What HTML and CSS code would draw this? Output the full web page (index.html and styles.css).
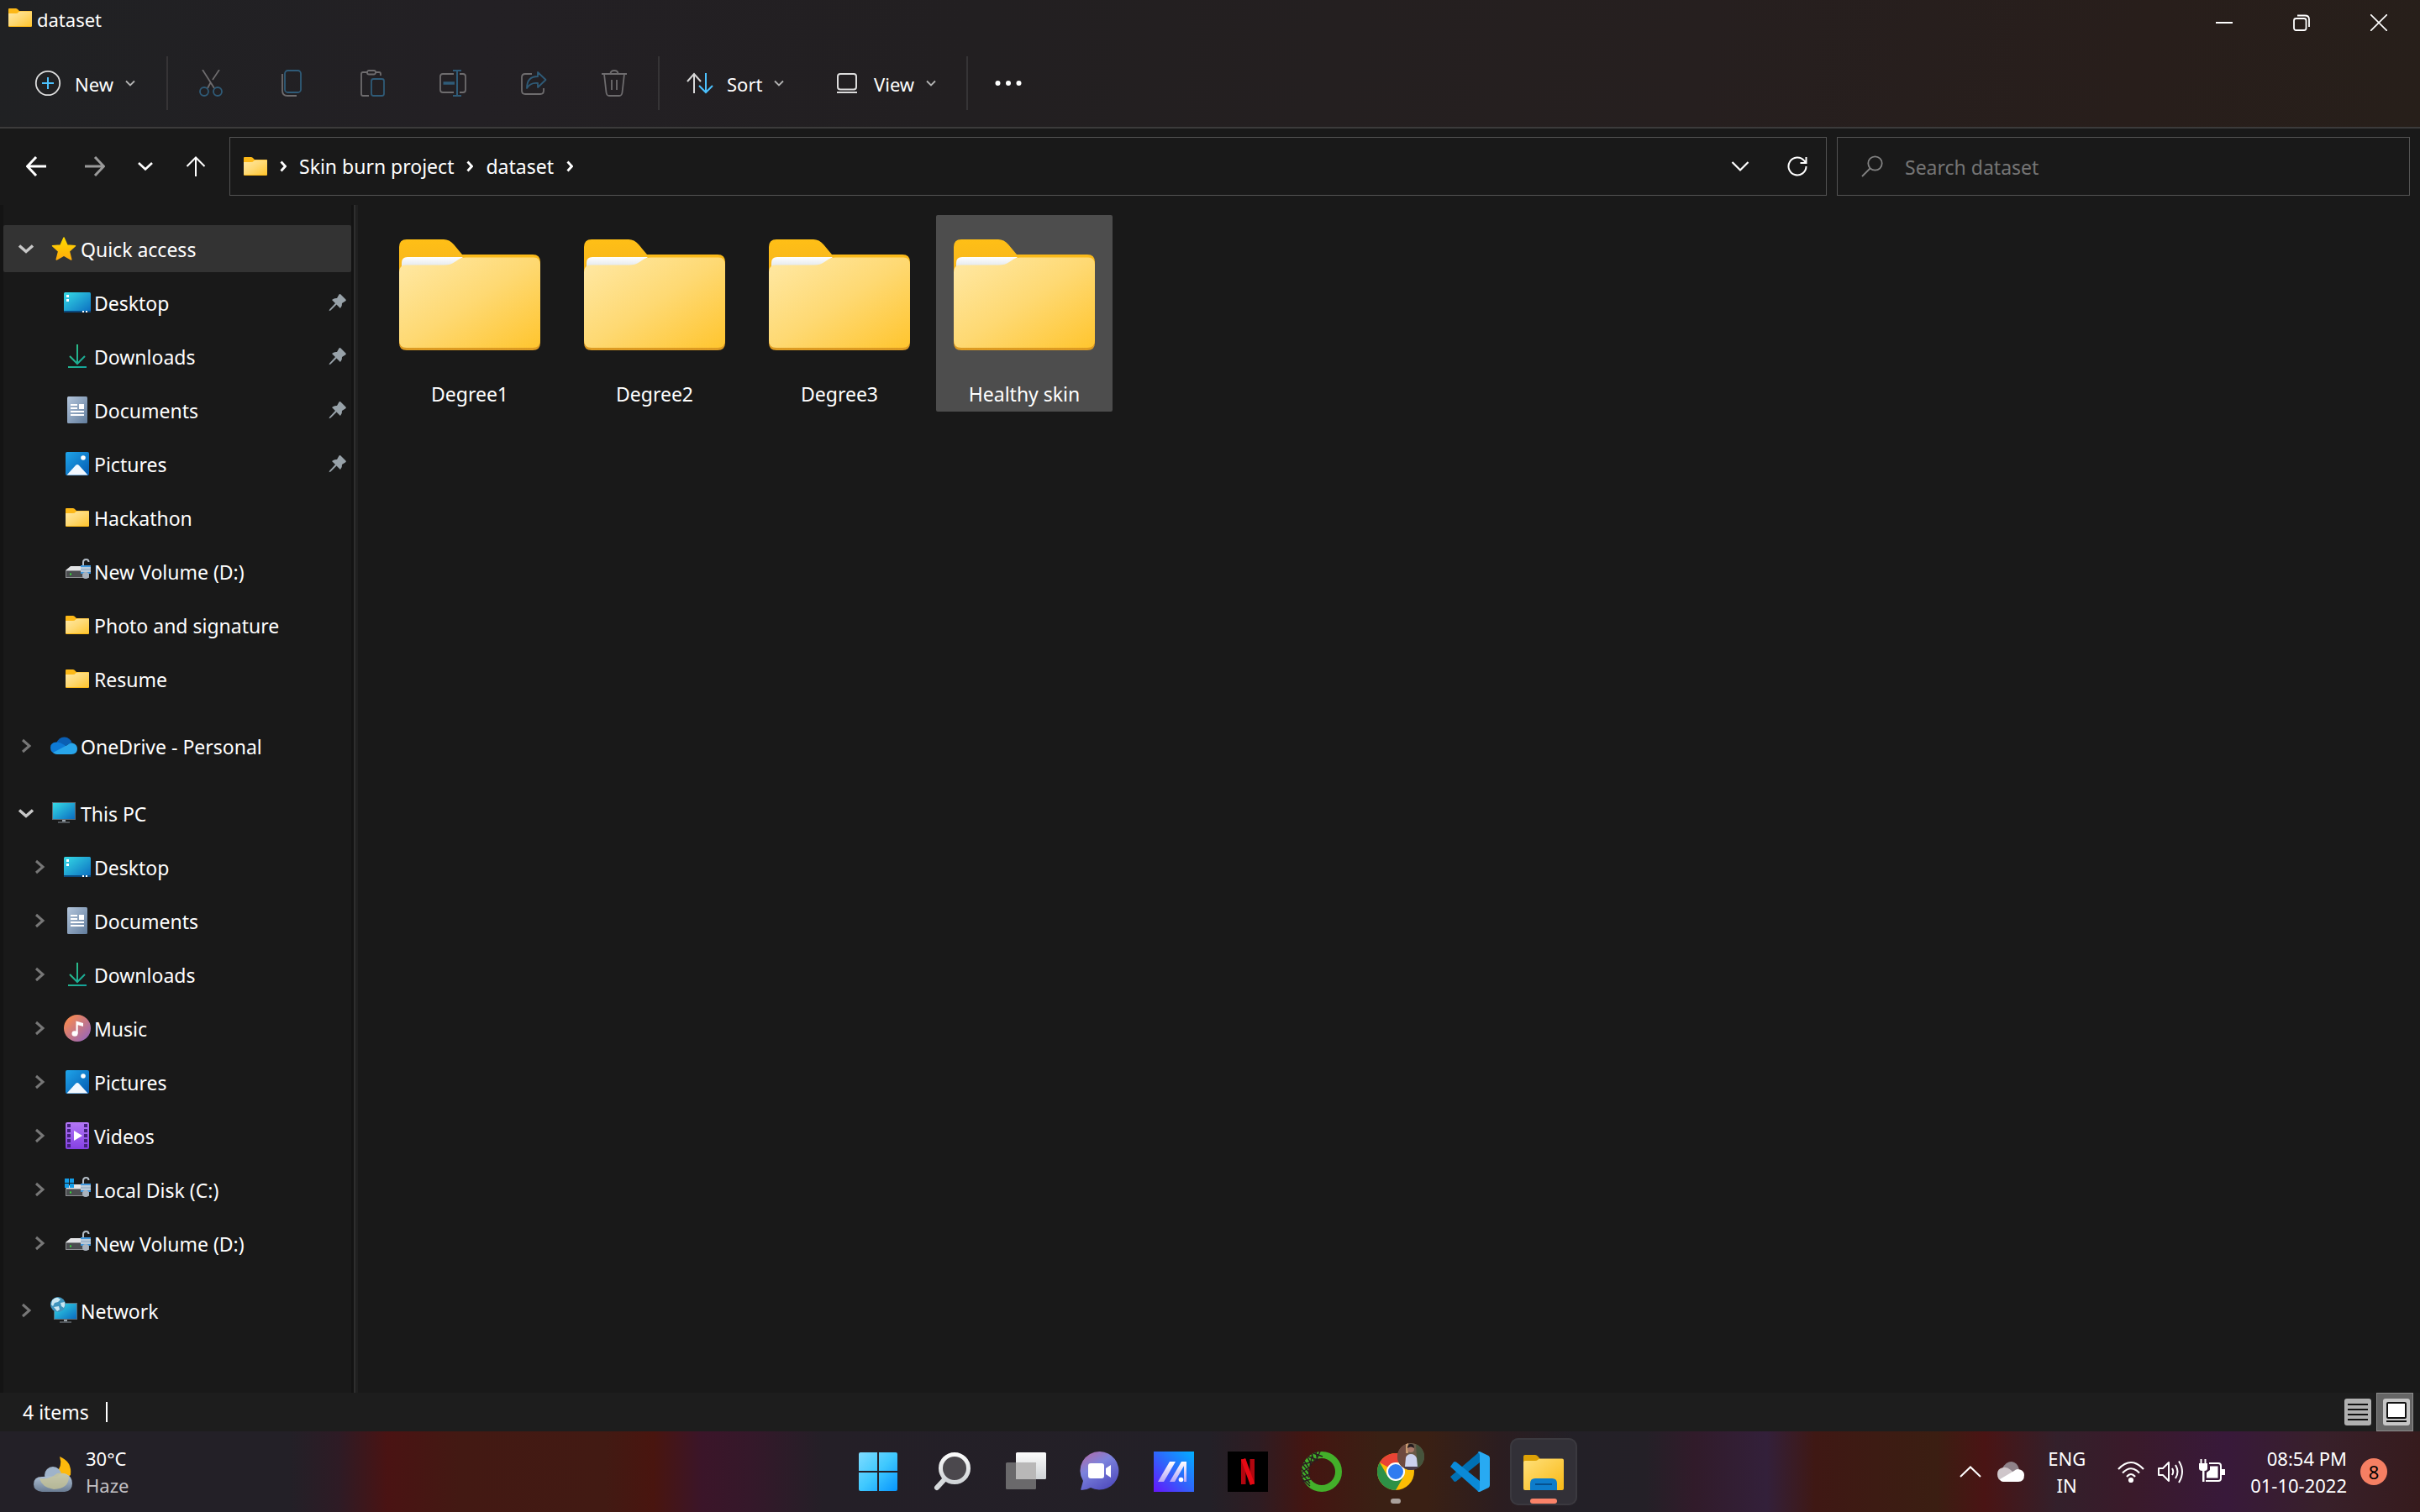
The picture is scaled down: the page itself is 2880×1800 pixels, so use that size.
FILE: index.html
```
<!DOCTYPE html>
<html lang="en">
<head>
    <meta charset="UTF-8">
    <meta name="viewport" content="width=device-width, initial-scale=1.0">
    <title>dataset</title>
    <link rel="stylesheet" href="styles.css">
</head>
<body>
    <!-- shared icons -->
    <svg class="sprite" aria-hidden="true">
        <defs>
            <linearGradient id="gFront" x1="0" y1="0" x2="1" y2="1">
                <stop offset="0" stop-color="#ffe9a6"/><stop offset="0.5" stop-color="#fed973"/><stop offset="1" stop-color="#ffc52e"/>
            </linearGradient>
            <linearGradient id="gBack" x1="0" y1="0" x2="0" y2="1">
                <stop offset="0" stop-color="#ffbf16"/><stop offset="0.5" stop-color="#f0ae22"/><stop offset="1" stop-color="#dc9a22"/>
            </linearGradient>
            <linearGradient id="gPaper" x1="0" y1="0" x2="0" y2="1">
                <stop offset="0" stop-color="#ffffff"/><stop offset="1" stop-color="#d9dfe4"/>
            </linearGradient>
            <linearGradient id="gScreen" x1="0" y1="0" x2="1" y2="1">
                <stop offset="0" stop-color="#35dbe6"/><stop offset="1" stop-color="#0b6cc0"/>
            </linearGradient>
            <linearGradient id="gDown" x1="0" y1="0" x2="1" y2="1">
                <stop offset="0" stop-color="#33c481"/><stop offset="1" stop-color="#12a29c"/>
            </linearGradient>
            <linearGradient id="gDoc" x1="0" y1="0" x2="1" y2="1">
                <stop offset="0" stop-color="#b4c6dc"/><stop offset="1" stop-color="#617c9c"/>
            </linearGradient>
            <linearGradient id="gPic" x1="0" y1="0" x2="1" y2="1">
                <stop offset="0" stop-color="#1fa5ea"/><stop offset="1" stop-color="#0459b0"/>
            </linearGradient>
            <linearGradient id="gMusic" x1="0" y1="0" x2="1" y2="1">
                <stop offset="0.1" stop-color="#fb8b4e"/><stop offset="1" stop-color="#8c62c4"/>
            </linearGradient>
            <linearGradient id="gVideo" x1="0" y1="0" x2="0" y2="1">
                <stop offset="0" stop-color="#b377f6"/><stop offset="1" stop-color="#8440e4"/>
            </linearGradient>
            <linearGradient id="gStar" x1="0" y1="0" x2="0" y2="1">
                <stop offset="0" stop-color="#ffdb00"/><stop offset="1" stop-color="#ffab0a"/>
            </linearGradient>
            <linearGradient id="gWin" gradientUnits="userSpaceOnUse" x1="1" y1="1" x2="47" y2="47">
                <stop offset="0" stop-color="#7fdcff"/><stop offset="0.5" stop-color="#3fc8fe"/><stop offset="1" stop-color="#0795fd"/>
            </linearGradient>
            <linearGradient id="gLens" x1="0" y1="0" x2="0" y2="1">
                <stop offset="0" stop-color="#fbfbfb"/><stop offset="1" stop-color="#cfd3d6"/>
            </linearGradient>
            <linearGradient id="gChat" x1="0" y1="0" x2="0.6" y2="1">
                <stop offset="0" stop-color="#b968a0"/><stop offset="0.45" stop-color="#7c83dd"/><stop offset="1" stop-color="#5350c0"/>
            </linearGradient>
            <linearGradient id="gAsus" x1="0" y1="1" x2="1" y2="0">
                <stop offset="0" stop-color="#6615fb"/><stop offset="0.5" stop-color="#2f66fb"/><stop offset="1" stop-color="#00b0ff"/>
            </linearGradient>
            <linearGradient id="gExp" x1="0" y1="0" x2="1" y2="1">
                <stop offset="0" stop-color="#ffe07a"/><stop offset="1" stop-color="#f9b915"/>
            </linearGradient>
            <linearGradient id="gCloud" x1="0" y1="0" x2="0" y2="1">
                <stop offset="0" stop-color="#b9cbe0"/><stop offset="1" stop-color="#6a7c92"/>
            </linearGradient>
            <linearGradient id="gSilver" x1="0" y1="0" x2="0" y2="1">
                <stop offset="0" stop-color="#ffffff"/><stop offset="1" stop-color="#b7a6f7"/>
            </linearGradient>
            <clipPath id="cAvatar"><circle cx="42" cy="6" r="16"/></clipPath>
        </defs>

        <symbol id="folder-big" viewBox="0 0 168 132">
            <path fill="url(#gBack)" d="M0 9Q0 0 9 0H53Q60 0 65 6L75 18H159Q168 18 168 27V123Q168 132 159 132H9Q0 132 0 123Z"/>
            <path fill="url(#gPaper)" d="M3 36V28Q3 21 10 21H76L66 29L56 34Z"/>
            <path fill="url(#gFront)" d="M0 39Q0 30.500 8 30.500H54Q61 30.500 66 27L72 23Q75 21.500 79 21.500H160Q168 21.500 168 30V120Q168 129 159 129H9Q0 129 0 120Z"/>
        </symbol>
        <symbol id="folder" viewBox="0 0 28 22">
            <path fill="#fcb817" d="M0 1Q0 0 1 0H9Q10.500 0 11.500 1.500L13 3H27Q28 3 28 4V21Q28 22 27 22H1Q0 22 0 21Z"/>
            <path fill="url(#gFront)" d="M0 6H9Q11 6 12 4.500Q13 3.500 14.500 3.500H28V21H0Z"/>
        </symbol>
        <symbol id="star" viewBox="0 0 32 32">
            <path fill="url(#gStar)" stroke="url(#gStar)" stroke-width="1.500" stroke-linejoin="round" d="M16 3L20 12L29.500 12.800L22.300 19.300L24.800 29L16 24L7.200 29L9.700 19.300L2.500 12.800L12 12Z"/>
        </symbol>
        <symbol id="desktop" viewBox="0 0 32 32">
            <rect y="4" width="32" height="24" rx="1.500" fill="url(#gScreen)"/>
            <path d="M0 26H32V27Q32 28 31 28H1Q0 28 0 27Z" fill="#0a4a80"/>
            <path d="M3 7h3v3H3zM3 12h3v3H3zM22 26h2v2h-2zM26 26h2v2h-2z" fill="#fff"/>
        </symbol>
        <symbol id="downloads" viewBox="0 0 32 32">
            <path d="M16 2V25M7 16L16 25L25 16M5 29H27" fill="none" stroke="url(#gDown)" stroke-width="2"/>
        </symbol>
        <symbol id="documents" viewBox="0 0 32 32">
            <rect x="4" width="24" height="32" rx="1.500" fill="url(#gDoc)"/>
            <path d="M8 9h8v2H8zM8 13h8v2H8zM18 9h6v6h-6zM8 17h16v2H8zM8 21h16v2H8z" fill="#fff"/>
        </symbol>
        <symbol id="pictures" viewBox="0 0 32 32">
            <rect x="2" y="2" width="28" height="28" rx="2" fill="url(#gPic)"/>
            <path d="M3.500 29.500L14 18Q16 16 18 18L28.500 29.500Z" fill="#f2f8ff"/>
            <circle cx="23" cy="9" r="2.800" fill="#fff"/>
        </symbol>
        <symbol id="music" viewBox="0 0 32 32">
            <circle cx="16" cy="16" r="16" fill="url(#gMusic)"/>
            <ellipse cx="13" cy="22.500" rx="3.500" ry="3.200" fill="#fff"/>
            <path d="M14.500 22.500V7.500L23 10V14L16.700 12.200V22.500Z" fill="#fff"/>
        </symbol>
        <symbol id="videos" viewBox="0 0 32 32">
            <rect x="2" width="28" height="32" rx="2" fill="url(#gVideo)"/>
            <path d="M4 2h4v4H4zM4 8h4v4H4zM4 14h4v4H4zM4 20h4v4H4zM4 26h4v4H4zM24 2h4v4h-4zM24 8h4v4h-4zM24 14h4v4h-4zM24 20h4v4h-4zM24 26h4v4h-4z" fill="#43217c"/>
            <path d="M12 10L22 16L12 22Z" fill="#fff"/>
        </symbol>
        <symbol id="drive" viewBox="0 0 32 32">
            <path d="M2 15L8 10H24L30 15Z" fill="#e2e3e5"/>
            <rect x="2" y="15" width="28" height="9" fill="#8d8f92"/>
            <rect x="3" y="16" width="26" height="7" fill="#4b4d50"/>
            <rect x="7" y="18.500" width="2" height="2" fill="#35e03a"/>
            <path d="M23 9V5.500Q23 2 26.500 2Q29.500 2 29.500 5" fill="none" stroke="#b5bec7" stroke-width="2"/>
            <rect x="20" y="9" width="12" height="10" fill="#3f97dd"/>
            <path d="M20 11h12v6H20z" fill="#b9cbdb"/>
            <path d="M20 13.500h12v1H20z" fill="#8aa3ba"/>
            <circle cx="26" cy="21" r="4" fill="#a8b2bd"/>
        </symbol>
        <symbol id="drive-win" viewBox="0 0 32 32">
            <use href="#drive"/>
            <path d="M1 3h5v5H1zM7 3h5v5H7zM1 9h5v5H1zM7 9h5v5H7z" fill="#139de8"/>
        </symbol>
        <symbol id="onedrive" viewBox="0 0 32 32">
            <path d="M7 13Q10 5 17 5.500Q23 6 25.500 12L16 17Z" fill="#0a5fb4"/>
            <path d="M6 25Q0 24 0 18Q0 12 7 11.500Q11 11 15 14L22 18L8 26Z" fill="#0d7ad6"/>
            <path d="M3 24L20 15Q23 12 26 12.500Q32 14 32 19.500Q32 26 25 26H8Q5 26 3 24Z" fill="#28a5ea"/>
        </symbol>
        <symbol id="pc" viewBox="0 0 32 32">
            <rect x="2" y="3" width="28" height="21" fill="#5c6d78"/>
            <rect x="3" y="4" width="26" height="19" fill="url(#gScreen)"/>
            <path d="M14 24h4v2h-4z" fill="#9aa4ab"/><path d="M9 26h14v2H9z" fill="#50555a"/>
        </symbol>
        <symbol id="network" viewBox="0 0 32 32">
            <rect x="4" y="7" width="28" height="20" fill="#5c6d78"/>
            <rect x="5" y="8" width="26" height="18" fill="url(#gScreen)"/>
            <path d="M16 27h4v2h-4z" fill="#9aa4ab"/><path d="M11 29h14v2H11z" fill="#50555a"/>
            <circle cx="9" cy="9" r="9" fill="#3f94bd"/>
            <path d="M2 4Q6 0 9 1L12 3L9 6L5 7L3 11L1 9ZM12 7L17 6Q18 10 16 13L13 11ZM4 12L10 11L11 15L8 17Z" fill="#c9e7f2"/>
        </symbol>
        <symbol id="pin" viewBox="0 0 22 22">
            <path d="M12.500 1.500Q13.500 .5 14.500 1.500L20.500 7.500Q21.500 8.500 20 9.500L16 12Q16.500 15 14 18L9.500 13.500L2.500 20.500L.5 21.300L1.300 19.300L8 12L4 8Q7 5.500 10 6Z" fill="#98a2a9"/>
        </symbol>
        <symbol id="chev-right" viewBox="0 0 22 22">
            <path d="M7 4L15 11L7 18" fill="none" stroke="currentColor" stroke-width="3"/>
        </symbol>
        <symbol id="chev-down" viewBox="0 0 22 22">
            <path d="M3 7.500L11 14.500L19 7.500" fill="none" stroke="currentColor" stroke-width="3.500"/>
        </symbol>
        <symbol id="caret" viewBox="0 0 12 8">
            <path d="M1 1.500L6 6.500L11 1.500" fill="none" stroke="#b4b4b4" stroke-width="1.800"/>
        </symbol>
        <symbol id="crumb" viewBox="0 0 8 14">
            <path d="M1.500 1.500L6.500 7L1.500 12.500" fill="none" stroke="#fff" stroke-width="2.800"/>
        </symbol>
    </svg>

    <header class="window-head">
        <div class="titlebar">
            <h1 class="title"><svg class="ic-folder"><use href="#folder"/></svg>dataset</h1>
            <div class="window-buttons">
                <button aria-label="Minimize"><svg viewBox="0 0 20 20"><path d="M0 10H20" stroke="#fff" stroke-width="2"/></svg></button>
                <button aria-label="Restore"><svg viewBox="0 0 20 20" fill="none" stroke="#fff" stroke-width="1.800"><rect x="1" y="5" width="14.500" height="14" rx="2.500"/><path d="M5 1.500H14Q19 1.500 19 6V15"/></svg></button>
                <button aria-label="Close"><svg viewBox="0 0 20 20"><path d="M0 0L20 20M20 0L0 20" stroke="#fff" stroke-width="1.600"/></svg></button>
            </div>
        </div>
        <div class="commands">
            <button class="cmd new">
                <svg class="ic32" viewBox="0 0 32 32" fill="none"><circle cx="16" cy="16" r="14.200" stroke="#dcdcdc" stroke-width="1.800"/><path d="M16 9V23M9 16H23" stroke="#4cc2ff" stroke-width="2"/></svg>
                <span>New</span><svg class="ic-caret"><use href="#caret"/></svg>
            </button>
            <span class="sep"></span>
            <button class="tool" aria-label="Cut"><svg class="ic32" viewBox="0 0 32 32" fill="none" stroke-width="1.800"><path d="M6 0L20 22M26 0L18 12M15.500 15.500L12 22" stroke="#6e6c6e"/><circle cx="8" cy="26" r="5" stroke="#2f5b78"/><circle cx="24" cy="26" r="5" stroke="#2f5b78"/></svg></button>
            <button class="tool" aria-label="Copy"><svg class="ic32" viewBox="0 0 32 32" fill="none" stroke-width="1.800"><path d="M5 5V25Q5 31 11 31H22" stroke="#6e6c6e"/><rect x="8" y="1" width="19" height="26" rx="3.500" stroke="#2f5b78"/></svg></button>
            <button class="tool" aria-label="Paste"><svg class="ic32" viewBox="0 0 32 32" fill="none" stroke-width="1.800"><path d="M10 3H5Q3 3 3 5V29Q3 31 5 31H12M20 3H24Q26 3 26 5V7" stroke="#6e6c6e"/><rect x="10" y="1" width="10" height="4.500" rx="2" stroke="#6e6c6e"/><rect x="15" y="11" width="15" height="20" rx="2.500" stroke="#2f5b78"/></svg></button>
            <button class="tool" aria-label="Rename"><svg class="ic32" viewBox="0 0 32 32" fill="none" stroke-width="1.800"><path d="M17 5H4Q1 5 1 8V24Q1 27 4 27H17M24 5H28Q31 5 31 8V24Q31 27 28 27H24" stroke="#6e6c6e"/><path d="M16 1H26M16 31H26M21 1V31" stroke="#2f5b78" stroke-width="2"/><path d="M4.500 16H18" stroke="#2f5b78" stroke-width="3.500"/></svg></button>
            <button class="tool" aria-label="Share"><svg class="ic32" viewBox="0 0 32 32" fill="none" stroke-width="1.800"><path d="M14 5H6Q2 5 2 9V25Q2 29 6 29H24Q28 29 28 25V22" stroke="#6e6c6e"/><path d="M21 3L30.500 12L21 21V16Q12 15 8 22Q8 8 21 8Z" stroke="#2f5b78" stroke-linejoin="round"/></svg></button>
            <button class="tool" aria-label="Delete"><svg class="ic32" viewBox="0 0 32 32" fill="none" stroke="#6e6c6e" stroke-width="1.800"><path d="M1 5H31M11.500 5Q11.500 1 16 1Q20.500 1 20.500 5M4 5L6.500 27Q7 31 10 31H22Q25 31 25.500 27L28 5M13 12V24M19 12V24"/></svg></button>
            <span class="sep"></span>
            <button class="cmd sort">
                <svg class="ic32" viewBox="0 0 32 32" fill="none" stroke-width="2"><path d="M9 28V5M1 14L9 5L17 14" stroke="#d8d8d8"/><path d="M23 4V27M15 19L23 27L31 19" stroke="#4cc2ff"/></svg>
                <span>Sort</span><svg class="ic-caret"><use href="#caret"/></svg>
            </button>
            <button class="cmd view">
                <svg class="ic32" viewBox="0 0 32 32" fill="none" stroke="#dcdcdc" stroke-width="2"><rect x="5" y="5" width="22" height="18.500" rx="3"/><path d="M4 27H28"/></svg>
                <span>View</span><svg class="ic-caret"><use href="#caret"/></svg>
            </button>
            <span class="sep"></span>
            <button class="tool more" aria-label="See more"><svg class="ic32" viewBox="0 0 32 32" fill="#fff"><circle cx="3.500" cy="16" r="3"/><circle cx="16" cy="16" r="3"/><circle cx="28.500" cy="16" r="3"/></svg></button>
        </div>
    </header>

    <div class="navbar">
        <div class="history">
            <button aria-label="Back"><svg viewBox="0 0 24 24"><path d="M24 12H2M12 1L1.500 12L12 23" stroke="#fff" stroke-width="3"/></svg></button>
            <button aria-label="Forward"><svg viewBox="0 0 24 24"><path d="M0 12H22M12 1L22.500 12L12 23" stroke="#9a9a9a" stroke-width="3"/></svg></button>
            <button class="recent" aria-label="Recent locations"><svg viewBox="0 0 24 24"><path d="M4 8L12 15.500L20 8" stroke="#fff" stroke-width="2.600"/></svg></button>
            <button aria-label="Up"><svg viewBox="0 0 24 24"><path d="M12 24V2M1.500 12L12 1.500L22.500 12" stroke="#fff" stroke-width="2"/></svg></button>
        </div>
        <div class="address">
            <svg class="ic-folder"><use href="#folder"/></svg>
            <svg class="ic-crumb"><use href="#crumb"/></svg>
            <a href="#">Skin burn project</a>
            <svg class="ic-crumb"><use href="#crumb"/></svg>
            <a href="#">dataset</a>
            <svg class="ic-crumb"><use href="#crumb"/></svg>
            <div class="address-end">
                <button aria-label="Previous locations"><svg viewBox="0 0 24 24"><path d="M2.500 7L12 16.500L21.500 7" stroke="#fff" stroke-width="2.200"/></svg></button>
                <button aria-label="Refresh"><svg viewBox="0 0 24 24"><path d="M22.500 12A10.500 10.500 0 1 1 20 5.200L22 7.500M22.500 1V8H15.500" stroke="#fff" stroke-width="2"/></svg></button>
            </div>
        </div>
        <label class="search">
            <svg viewBox="0 0 26 26" fill="none" stroke="#828282" stroke-width="1.800"><circle cx="16.500" cy="9.500" r="8.200"/><path d="M10.500 15.500L1 25"/></svg>
            <input type="search" placeholder="Search dataset" aria-label="Search dataset">
        </label>
    </div>

    <div class="body">
        <nav class="sidebar">
            <ul class="tree">
                <li><a class="row active" href="#"><svg class="ic-chev open"><use href="#chev-down"/></svg><svg class="ic32"><use href="#star"/></svg><span>Quick access</span></a>
                    <ul>
                        <li><a class="row" href="#"><i class="ic-chev"></i><svg class="ic32"><use href="#desktop"/></svg><span>Desktop</span><svg class="ic-pin"><use href="#pin"/></svg></a></li>
                        <li><a class="row" href="#"><i class="ic-chev"></i><svg class="ic32"><use href="#downloads"/></svg><span>Downloads</span><svg class="ic-pin"><use href="#pin"/></svg></a></li>
                        <li><a class="row" href="#"><i class="ic-chev"></i><svg class="ic32"><use href="#documents"/></svg><span>Documents</span><svg class="ic-pin"><use href="#pin"/></svg></a></li>
                        <li><a class="row" href="#"><i class="ic-chev"></i><svg class="ic32"><use href="#pictures"/></svg><span>Pictures</span><svg class="ic-pin"><use href="#pin"/></svg></a></li>
                        <li><a class="row" href="#"><i class="ic-chev"></i><svg class="ic32 pad"><use href="#folder"/></svg><span>Hackathon</span></a></li>
                        <li><a class="row" href="#"><i class="ic-chev"></i><svg class="ic32"><use href="#drive"/></svg><span>New Volume (D:)</span></a></li>
                        <li><a class="row" href="#"><i class="ic-chev"></i><svg class="ic32 pad"><use href="#folder"/></svg><span>Photo and signature</span></a></li>
                        <li><a class="row" href="#"><i class="ic-chev"></i><svg class="ic32 pad"><use href="#folder"/></svg><span>Resume</span></a></li>
                    </ul>
                </li>
                <li><a class="row" href="#"><svg class="ic-chev"><use href="#chev-right"/></svg><svg class="ic32"><use href="#onedrive"/></svg><span>OneDrive - Personal</span></a></li>
                <li><a class="row" href="#"><svg class="ic-chev open"><use href="#chev-down"/></svg><svg class="ic32"><use href="#pc"/></svg><span>This PC</span></a>
                    <ul>
                        <li><a class="row" href="#"><svg class="ic-chev"><use href="#chev-right"/></svg><svg class="ic32"><use href="#desktop"/></svg><span>Desktop</span></a></li>
                        <li><a class="row" href="#"><svg class="ic-chev"><use href="#chev-right"/></svg><svg class="ic32"><use href="#documents"/></svg><span>Documents</span></a></li>
                        <li><a class="row" href="#"><svg class="ic-chev"><use href="#chev-right"/></svg><svg class="ic32"><use href="#downloads"/></svg><span>Downloads</span></a></li>
                        <li><a class="row" href="#"><svg class="ic-chev"><use href="#chev-right"/></svg><svg class="ic32"><use href="#music"/></svg><span>Music</span></a></li>
                        <li><a class="row" href="#"><svg class="ic-chev"><use href="#chev-right"/></svg><svg class="ic32"><use href="#pictures"/></svg><span>Pictures</span></a></li>
                        <li><a class="row" href="#"><svg class="ic-chev"><use href="#chev-right"/></svg><svg class="ic32"><use href="#videos"/></svg><span>Videos</span></a></li>
                        <li><a class="row" href="#"><svg class="ic-chev"><use href="#chev-right"/></svg><svg class="ic32"><use href="#drive-win"/></svg><span>Local Disk (C:)</span></a></li>
                        <li><a class="row" href="#"><svg class="ic-chev"><use href="#chev-right"/></svg><svg class="ic32"><use href="#drive"/></svg><span>New Volume (D:)</span></a></li>
                    </ul>
                </li>
                <li><a class="row" href="#"><svg class="ic-chev"><use href="#chev-right"/></svg><svg class="ic32"><use href="#network"/></svg><span>Network</span></a></li>
            </ul>
        </nav>
        <main class="files">
            <a class="file" href="#"><svg><use href="#folder-big"/></svg><span>Degree1</span></a>
            <a class="file" href="#"><svg><use href="#folder-big"/></svg><span>Degree2</span></a>
            <a class="file" href="#"><svg><use href="#folder-big"/></svg><span>Degree3</span></a>
            <a class="file selected" href="#"><svg><use href="#folder-big"/></svg><span>Healthy skin</span></a>
        </main>
    </div>

    <div class="statusbar">
        <span class="count">4 items</span>
        <div class="layouts">
            <button aria-label="Details"><svg class="ic32" viewBox="0 0 32 32"><rect width="32" height="32" rx="3" fill="#b0b0b0"/><path d="M4 7H28M4 13H28M4 19H28M4 25H28" stroke="#111" stroke-width="2"/></svg></button>
            <button class="on" aria-label="Large icons"><svg class="ic32" viewBox="0 0 32 32"><rect width="32" height="32" rx="3" fill="#c6c6c6"/><rect x="5" y="5" width="22" height="18" rx="1" fill="#fff" stroke="#111" stroke-width="2"/><path d="M4 27H28" stroke="#111" stroke-width="2"/></svg></button>
        </div>
    </div>

    <footer class="taskbar">
        <button class="weather">
            <svg viewBox="0 0 46 42"><path d="M31 0Q46 6 44 22L38 26L26 20Q35 12 31 0Z" fill="#fdb90c"/><circle cx="23" cy="22" r="10" fill="#9fb3ca"/><path d="M10 42Q0 41 0 33Q0 24 10 24Q20 23 28 24Q33 18 39 21Q46 24 46 32Q46 41 37 42Z" fill="url(#gCloud)"/><path d="M7 26Q18 28 28 20Q36 18 42 24Q42 38 24 39Q10 37 7 26Z" fill="#c9c596" opacity="0.750"/></svg>
            <span class="two-lines"><span>30°C</span><span class="dim">Haze</span></span>
        </button>
        <div class="apps">
            <button aria-label="Start"><svg viewBox="0 0 48 48" fill="url(#gWin)"><path d="M3 1H23V23H1V3Q1 1 3 1ZM25 1H45Q47 1 47 3V23H25ZM1 25H23V47H3Q1 47 1 45ZM25 25H47V45Q47 47 45 47H25Z"/></svg></button>
            <button aria-label="Search"><svg viewBox="0 0 48 48"><path d="M17 31L6 43" stroke="#d6dadc" stroke-width="6" stroke-linecap="round"/><circle cx="27" cy="20" r="16.500" fill="#4b484d" stroke="url(#gLens)" stroke-width="5"/></svg></button>
            <button aria-label="Task view"><svg viewBox="0 0 48 48"><rect x="12" y="1" width="36" height="32" rx="1.500" fill="url(#gLens)"/><rect y="13" width="36" height="32" rx="1.500" fill="#6a696b"/><path d="M12 13H36V33H12Z" fill="#b9b8b8"/></svg></button>
            <button aria-label="Chat"><svg viewBox="0 0 48 48"><path d="M24 0A22.800 22.800 0 1 1 13 43Q8 46 2 46Q1 46 1.500 44L4 35A22.800 22.800 0 0 1 24 0Z" fill="url(#gChat)"/><rect x="10" y="14" width="19" height="18" rx="3" fill="#fff"/><path d="M31 20L37 16V31L31 27Z" fill="#fff"/></svg></button>
            <button aria-label="MyASUS"><svg viewBox="0 0 48 48"><rect width="48" height="48" fill="url(#gAsus)"/><path d="M5 36L19 12H26L12 36ZM19 36L33 12H39L25 36ZM36 12H39V36H36Z" fill="url(#gSilver)"/><circle cx="32.500" cy="33.500" r="2.800" fill="#fff"/></svg></button>
            <button aria-label="Netflix"><svg viewBox="0 0 48 48"><rect width="48" height="48" fill="#000"/><rect x="16" y="9" width="5.500" height="30" fill="#b1060f"/><rect x="26.500" y="9" width="5.500" height="30" fill="#b1060f"/><line x1="18.500" y1="9" x2="29.500" y2="39" stroke="#e50914" stroke-width="5.500"/></svg></button>
            <button aria-label="Anaconda"><svg viewBox="0 0 48 48" fill="none"><circle cx="24" cy="24" r="20" stroke="#43b02a" stroke-width="8"/><path d="M10 41L1 33M10 38L0 26M9 31L0 20M10 26L1 15M9 20L3 11M12 16L7 7M16 13L12 3M19 11L17 0M0 31L10 27M0 25L9 19M2 15L14 12M8 6L19 10M14 2L25 6M1 36L11 33M22 0L17 11M13 3L10 17" stroke="#2a1c20" stroke-width="1.400"/></svg></button>
            <button class="running" aria-label="Google Chrome"><svg viewBox="0 0 48 48"><circle cx="24" cy="24" r="22" fill="#fbbc04"/><path d="M24 24L4.950 13A22 22 0 0 1 43.050 13L24 13Z" fill="#ea4335"/><path d="M24 24L33.500 29.500L24 46A22 22 0 0 1 4.950 13L14.500 29.500Z" fill="#2d9146"/><circle cx="24" cy="24" r="11" fill="#fff"/><circle cx="24" cy="24" r="9" fill="#2f7bf0"/><g clip-path="url(#cAvatar)"><rect x="26" y="-10" width="32" height="32" fill="#6a5a48"/><path d="M26 -10H40L34 22H26Z" fill="#6f4a40"/><path d="M48 -10H58V22H50Z" fill="#46543c"/><path d="M36 -10H39V2H36Z" fill="#c89a70"/><path d="M35 18L36 7Q38 3 42 3Q47 3 49 8L50 18Z" fill="#ccd2ee"/><path d="M34 18H51V22H34Z" fill="#4a3c4a"/><circle cx="42" cy="-3" r="4" fill="#a87868"/><path d="M38 -4Q38 -9 42 -9Q46 -9 46 -4Q42 -7 38 -4Z" fill="#241c1e"/></g></svg></button>
            <button aria-label="Visual Studio Code"><svg viewBox="0 0 48 48"><path d="M1 30L5 35Q6 36.500 8 35.500L36 13V0Z" fill="#0070b4"/><path d="M1 18L5 12.500Q6 11.500 8 12.500L36 35V48Q34 48 33 46.500Z" fill="#0a8ad8"/><path d="M36 0L46.500 5Q48 6 48 8V40Q48 42 46.500 43L36 48Q34.500 48 33.500 47Q36 47 36 44V4Q36 1.500 33.500 1Q34.500 0 36 0Z" fill="#28aaf2"/></svg></button>
            <button class="current" aria-label="File Explorer"><svg viewBox="0 0 48 48"><path d="M0 6Q0 4 2 4H14Q16 4 17 5.500L20 9H46V20H0Z" fill="#dda105"/><path d="M0 13Q0 11 2 11H14Q16 11 17 10Q18 8.500 20 8.500H46Q48 8.500 48 10.500V44Q48 46 46 46H2Q0 46 0 44Z" fill="url(#gExp)"/><path d="M8 46V38Q8 32 14 32H34Q40 32 40 38V46Z" fill="#0d7ccb"/><path d="M14 39H34" stroke="#06508e" stroke-width="2"/></svg></button>
        </div>
        <div class="tray">
            <button class="caret-up" aria-label="Show hidden icons"><svg viewBox="0 0 26 14"><path d="M1 13L13 1.500L25 13" fill="none" stroke="#fff" stroke-width="2"/></svg></button>
            <button class="cloud" aria-label="OneDrive"><svg viewBox="0 0 32 24"><path d="M6 8Q10 0 17 0Q24 1 26 9L16 16Z" fill="#8f838a"/><path d="M6 23Q0 22 0 15Q0 8 7 7Q11 6 16 10L20 14L6 23Z" fill="#cfc6ca"/><path d="M3 21L20 11Q23 8 27 9.500Q32 11 32 16Q32 24 25 24H7Q4 24 3 21Z" fill="#fff"/></svg></button>
            <button class="lang two-lines"><span>ENG</span><span>IN</span></button>
            <button class="system" aria-label="Network, volume and battery">
                <svg class="ic32" viewBox="0 0 32 32" fill="none" stroke="#fff" stroke-width="2.200"><path d="M1 13Q16 -3 31 13M6 17.500Q16 7 26 17.500M11 22Q16 16 21 22"/><circle cx="16" cy="26" r="2" fill="#fff"/></svg>
                <svg class="ic32" viewBox="0 0 32 32" fill="none" stroke="#fff" stroke-width="2"><path d="M1 12H6L13 5V27L6 20H1Z" stroke-linejoin="round"/><path d="M17 12Q19.500 16 17 20M21 8Q26 16 21 24M25 3.500Q33 16 25 29"/></svg>
                <svg class="ic32" viewBox="0 0 32 32"><path d="M1 6H11V12Q11 15 7.500 15V28H5V15Q1 15 1 12ZM2.500 1H4.500V6H2.500ZM7.500 1H9.500V6H7.500Z" fill="#fff"/><path d="M13 6H24Q27 6 27 9V24Q27 27 24 27H9" fill="none" stroke="#fff" stroke-width="2"/><path d="M14 9.500H23.500V23.500H10V17L14 14Z" fill="#fff"/><path d="M28 13H32V20H28Z" fill="#fff"/></svg>
            </button>
            <button class="clock two-lines"><span>08:54 PM</span><span>01-10-2022</span></button>
            <span class="badge">8</span>
        </div>
    </footer>
</body>
</html>
```
FILE: styles.css
```
* {
    box-sizing: border-box;
}
body {
    margin: 0;
    height: 100vh;
    display: flex;
    flex-direction: column;
    overflow: hidden;
    background-color: #191919;
    color: #fff;
    font-family: "Noto Sans", "Open Sans", sans-serif;
    font-size: 22px;
    line-height: 30px;
}
button {
    padding: 0;
    border: none;
    background: none;
    color: inherit;
    font: inherit;
    display: flex;
    align-items: center;
    justify-content: center;
    cursor: pointer;
}
a {
    color: inherit;
    text-decoration: none;
}
ul {
    list-style: none;
    margin: 0;
    padding: 0;
}
svg {
    display: block;
    flex: none;
}
.sprite {
    position: absolute;
    width: 0;
    height: 0;
}
.ic32 {
    width: 32px;
    height: 32px;
}
.pad {
    padding: 0 2px;
}
.ic-folder {
    width: 28px;
    height: 22px;
}
.ic-crumb {
    width: 8px;
    height: 14px;
}
.ic-caret {
    width: 12px;
    height: 8px;
    margin-left: 14px;
}

/* title bar and commands */
.window-head {
    background: linear-gradient(100deg, #202123 0%, #232024 20%, #221f21 40%, #261f1f 70%, #281e1b 88%, #271f1a 100%);
    border-bottom: 2px solid #3c3b3b;
}
.titlebar {
    display: flex;
    justify-content: space-between;
    height: 54px;
}
.title {
    margin: 0;
    padding-left: 10px;
    height: 46px;
    display: flex;
    align-items: center;
    gap: 6px;
    font-size: 22px;
    font-weight: 400;
}
.title .ic-folder {
    margin-bottom: 4px;
}
.window-buttons {
    display: flex;
    padding-right: 3px;
}
.window-buttons button {
    width: 92px;
}
.window-buttons svg {
    width: 20px;
    height: 20px;
}
.commands {
    display: flex;
    align-items: center;
    height: 97px;
    padding-bottom: 7px;
}
.cmd {
    height: 64px;
    justify-content: flex-start;
}
.cmd .ic32 {
    margin-right: 16px;
}
.cmd span {
    padding-top: 2px;
}
.new {
    width: 198px;
    padding-left: 41px;
}
.sort {
    width: 175px;
    padding-left: 32px;
}
.view {
    width: 190px;
    padding-left: 32px;
}
.tool {
    width: 96px;
    height: 64px;
}
.sep {
    width: 2px;
    height: 64px;
    background-color: #363436;
}
.sep + .tool {
    margin-left: 3px;
}
.tool + .sep {
    margin-left: 4px;
}
.sep + .more {
    margin-left: 0;
}

/* address row */
.navbar {
    display: flex;
    height: 91px;
    padding: 10px 12px 11px 8px;
    font-size: 23px;
}
.history {
    display: flex;
    margin-right: 5px;
}
.history button {
    width: 70px;
}
.history .recent {
    width: 50px;
}
.history svg, .address-end svg {
    width: 24px;
    height: 24px;
    fill: none;
}
.address {
    flex: 1;
    display: flex;
    align-items: center;
    gap: 15px;
    padding-left: 16px;
    border: 1px solid #535353;
}
.address-end {
    margin-left: auto;
    align-self: stretch;
    display: flex;
}
.address-end button {
    width: 68px;
}
.search {
    width: 682px;
    margin-left: 12px;
    padding-left: 28px;
    display: flex;
    align-items: center;
    gap: 26px;
    border: 1px solid #535353;
}
.search svg {
    width: 26px;
    height: 26px;
}
.search input {
    flex: 1;
    padding: 2px 0 0;
    border: none;
    outline: none;
    background: none;
    color: #fff;
    font: inherit;
}
.search input::placeholder {
    color: #757575;
    opacity: 1;
}

/* folder tree and files */
.body {
    flex: 1;
    display: flex;
    min-height: 0;
}
.sidebar {
    width: 426px;
    padding-top: 24px;
    border-left: 4px solid #141414;
    border-right: 3px solid #202020;
    box-shadow: inset -2px 0 #2e2e2e, inset -5px 0 #131313;
}
.tree {
    margin-right: 5px;
    font-size: 23px;
}
.tree > li {
    padding-bottom: 16px;
}
.row {
    display: flex;
    align-items: center;
    height: 56px;
    margin-bottom: 8px;
    padding: 0 5px 0 16px;
}
.tree > li > ul {
    display: flow-root;
}
.row span {
    flex: 1;
    margin-left: 4px;
    padding-top: 2px;
}
.tree ul .row {
    padding-left: 32px;
}
.active {
    background-color: #333;
    border-radius: 2px;
}
.ic-chev {
    width: 22px;
    height: 22px;
    margin-right: 18px;
    color: #777;
}
.open {
    color: #c8c8c8;
}
.ic-pin {
    width: 22px;
    height: 22px;
}
.files {
    flex: 1;
    display: flex;
    flex-wrap: wrap;
    align-content: flex-start;
    gap: 10px;
    padding: 12px 28px;
    font-size: 23px;
}
.file {
    width: 210px;
    height: 234px;
    padding-top: 29px;
    display: flex;
    flex-direction: column;
    align-items: center;
    gap: 37px;
    border-radius: 2px;
}
.file svg {
    width: 168px;
    height: 132px;
}
.selected {
    background-color: #4d4d4d;
}

/* status bar */
.statusbar {
    display: flex;
    align-items: center;
    justify-content: space-between;
    height: 46px;
    padding: 0 8px 0 27px;
    background-color: #1d1d1d;
    font-size: 23px;
}
.count {
    padding-right: 20px;
    border-right: 2px solid #fff;
    line-height: 24px;
}
.layouts {
    display: flex;
    align-self: stretch;
}
.layouts button {
    width: 44px;
}
.layouts .on {
    padding-left: 4px;
    background-color: #666;
    border: 1px solid #8c8c8c;
}

/* taskbar */
.taskbar {
    display: grid;
    grid-template-columns: 1fr auto 1fr;
    align-items: center;
    height: 96px;
    padding-left: 2px;
    background: linear-gradient(90deg, #232027 0%, #232027 12%, #2e1b25 14%, #4a1313 16%, #431913 19%, #421a13 25%, #49150f 27%, #3b1529 29%, #35182a 31%, #241f27 34%, #232027 50%, #2e1c22 52%, #441511 54%, #3a2014 57%, #3a2014 59%, #2b1d20 62%, #232027 65%, #242027 68%, #311b2a 70%, #33203a 73%, #3f1814 75%, #3b1e12 80%, #4a1414 82%, #33202b 85%, #3a1a2a 88%, #38193a 92%, #38202a 96%, #361b1d 100%);
}
.two-lines {
    display: flex;
    flex-direction: column;
    line-height: 32px;
}
.weather {
    justify-self: start;
    padding-left: 38px;
    gap: 16px;
    text-align: left;
}
.weather svg {
    width: 46px;
    height: 42px;
    margin-top: 6px;
}
.dim {
    color: #c3c1c4;
}
.apps {
    display: flex;
    gap: 8px;
}
.apps button {
    position: relative;
    width: 80px;
    height: 80px;
    border-radius: 10px;
}
.apps svg {
    width: 48px;
    height: 48px;
    overflow: visible;
}
.apps .current {
    background-color: #323037;
    box-shadow: inset 0 0 0 2px #3b393f;
}
.running::after, .current::after {
    content: "";
    position: absolute;
    bottom: 2px;
    width: 12px;
    height: 6px;
    border-radius: 3px;
    background-color: #a9a09b;
}
.current::after {
    width: 32px;
    background-color: #fa8268;
}
.tray {
    justify-self: end;
    display: flex;
    align-items: center;
    padding-right: 39px;
}
.caret-up svg {
    width: 26px;
    height: 14px;
}
.cloud svg {
    width: 32px;
    height: 24px;
}
.cloud {
    margin-left: 19px;
}
.lang {
    align-items: center;
    margin-left: 28px;
}
.system {
    gap: 16px;
    margin-left: 38px;
}
.clock {
    align-items: flex-end;
    margin-left: 30px;
}
.badge {
    width: 32px;
    height: 32px;
    margin-left: 16px;
    border-radius: 50%;
    background-color: #f57f63;
    color: #000;
    font-size: 22px;
    line-height: 32px;
    text-align: center;
}
```
